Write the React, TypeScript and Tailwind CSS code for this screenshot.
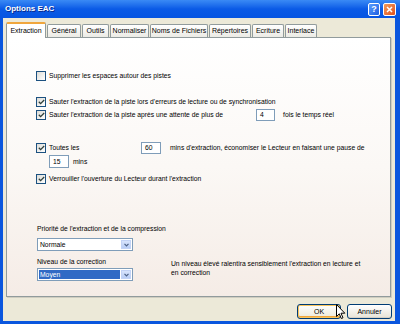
import { ReactNode } from "react";

const tabs = [
  { label: "Extraction", w: "w-[40px]", active: true },
  { label: "Général", w: "w-[34px]" },
  { label: "Outils", w: "w-[27px]" },
  { label: "Normaliser", w: "w-[39px]" },
  { label: "Noms de Fichiers", w: "w-[58px]" },
  { label: "Répertoires", w: "w-[42px]" },
  { label: "Ecriture", w: "w-[32px]" },
  { label: "Interlace", w: "w-[32px]" },
];

const Check = ({ checked = true }: { checked?: boolean }) => (
  <span className="w-[10px] h-[10px] shrink-0 border border-[#1c5180] bg-gradient-to-br from-[#dcdcd7] to-white flex items-center justify-center">
    {checked && (
      <svg width="7" height="6" viewBox="0 0 7 6">
        <path d="M0.8 2.8 L2.6 4.6 L6.2 1" stroke="#2f3f3a" strokeWidth="1.3" fill="none" />
      </svg>
    )}
  </span>
);

const Field = ({ value, className }: { value: string; className: string }) => (
  <span className={`shrink-0 border border-[#7f9db9] bg-white flex items-center pl-[3px] ${className}`}>{value}</span>
);

const Combo = ({ value, selected }: { value: string; selected?: boolean }) => (
  <div className="w-[96px] h-[13px] border border-[#7f9db9] bg-white flex p-[1px]">
    <span
      className={`flex-1 flex items-center pl-[1px] mr-[1px] ${
        selected ? "bg-[#316ac5] text-white" : ""
      }`}
    >
      {value}
    </span>
    <span className="w-[10px] bg-gradient-to-b from-[#d8e4fc] to-[#b9cdf5] border border-[#c3d3f6] flex items-center justify-center">
      <svg width="5" height="4" viewBox="0 0 5 4">
        <path d="M0.5 0.8 L2.5 2.8 L4.5 0.8" stroke="#4d6185" strokeWidth="1.2" fill="none" />
      </svg>
    </span>
  </div>
);

const Row = ({ className, children }: { className: string; children: ReactNode }) => (
  <div className={`h-[13px] flex items-center ${className}`}>{children}</div>
);

export default function App() {
  return (
    <div className="w-[400px] h-[324px] flex flex-col bg-[#0a56de] font-['Liberation_Sans',Arial,sans-serif] text-[6.75px] leading-[10px] text-black relative overflow-hidden">
      {/* title bar */}
      <div className="h-[18px] shrink-0 flex items-center bg-gradient-to-b from-[#3a8af5] via-[#0a5ae6] to-[#0655e2] pl-[5px] pr-[4px]">
        <span className="text-white font-bold text-[8px] [text-shadow:1px_1px_0_#0b2a8c]">Options EAC</span>
        <div className="ml-auto flex gap-[3px]">
          <span className="w-[12px] h-[13px] rounded-[2px] border border-white bg-gradient-to-br from-[#5a9cff] to-[#1f5fe0] flex items-center justify-center text-white font-bold text-[9px]">
            ?
          </span>
          <span className="w-[13px] h-[13px] rounded-[2px] border border-white bg-gradient-to-br from-[#f09a5a] to-[#e0501c] flex items-center justify-center">
            <svg width="7" height="7" viewBox="0 0 7 7">
              <path d="M1 1 L6 6 M6 1 L1 6" stroke="white" strokeWidth="1.5" />
            </svg>
          </span>
        </div>
      </div>

      {/* client */}
      <div className="flex-1 ml-[3px] mr-[5px] mb-[3px] bg-[#ece9d8] flex flex-col">
        <div className="h-[19px] pt-[4px] pl-[3px] flex items-end gap-[1px] relative z-10 text-[7px]">
          {tabs.map((t) =>
            t.active ? (
              <div
                key={t.label}
                className={`${t.w} h-[16px] -mb-[1px] bg-white border-x border-[#919b9c] border-t-2 border-t-[#f0a63c] rounded-t-[2px] flex items-center justify-center`}
              >
                {t.label}
              </div>
            ) : (
              <div
                key={t.label}
                className={`${t.w} h-[13px] bg-gradient-to-b from-white to-[#ecebe5] border-x border-t border-[#919b9c] rounded-t-[2px] flex items-center justify-center`}
              >
                {t.label}
              </div>
            )
          )}
        </div>

        {/* panel */}
        <div className="ml-[3px] w-[385px] h-[260px] border border-[#919b9c] bg-gradient-to-b from-white via-[#fbf8f5] to-[#f5ece6] flex flex-col pl-[29px] shadow-[1px_1px_0_#d0cdc0]">
          <Row className="mt-[31px] gap-[3px]">
            <Check checked={false} />
            <span>Supprimer les espaces autour des pistes</span>
          </Row>
          <Row className="mt-[13px] gap-[3px]">
            <Check />
            <span>Sauter l'extraction de la piste lors d'erreurs de lecture ou de synchronisation</span>
          </Row>
          <Row className="gap-[3px]">
            <Check />
            <span className="w-[204px]">Sauter l'extraction de la piste après une attente de plus de</span>
            <Field value="4" className="w-[19px] h-[12px]" />
            <span className="ml-[5px]">fois le temps réel</span>
          </Row>
          <Row className="mt-[20px] gap-[3px]">
            <Check />
            <span className="w-[89px]">Toutes les</span>
            <Field value="60" className="w-[20px] h-[12px]" />
            <span className="ml-[6px]">mins d'extraction, économiser le Lecteur en faisant une pause de</span>
          </Row>
          <Row className="mt-[1px] pl-[13px]">
            <Field value="15" className="w-[20px] h-[13px]" />
            <span className="ml-[4px]">mins</span>
          </Row>
          <Row className="mt-[4px] gap-[3px]">
            <Check />
            <span>Verrouiller l'ouverture du Lecteur durant l'extraction</span>
          </Row>

          <div className="mt-[39px] ml-[1px] h-[10px]">Priorité de l'extraction et de la compression</div>
          <div className="mt-[4px] ml-[1px]">
            <Combo value="Normale" />
          </div>
          <div className="ml-[1px] flex">
            <div className="flex flex-col">
              <div className="mt-[6px] h-[10px]">Niveau de la correction</div>
              <div className="mt-[1px]">
                <Combo value="Moyen" selected />
              </div>
            </div>
            <div className="ml-[38px] mt-[8px] leading-[9px]">
              Un niveau élevé ralentira sensiblement l'extraction en lecture et
              <br />
              en correction
            </div>
          </div>
        </div>

        {/* buttons */}
        <div className="mt-[7px] mr-[3px] flex justify-end gap-[6px]">
          <button className="w-[44px] h-[15px] rounded-[3px] border border-[#003c74] bg-gradient-to-b from-white to-[#ece9d8] shadow-[inset_0_0_0_1px_#f8c45c,inset_0_-1px_0_1px_#f0a63c] flex items-center justify-center text-[7px]">
            OK
          </button>
          <button className="w-[45px] h-[15px] rounded-[3px] border border-[#003c74] bg-gradient-to-b from-white to-[#e6e3d6] shadow-[inset_0_-1px_0_#d6d0c5] flex items-center justify-center text-[7px]">
            Annuler
          </button>
        </div>
      </div>

      {/* mouse cursor */}
      <svg className="absolute left-[336px] top-[304px]" width="10" height="17" viewBox="0 0 10 17">
        <path d="M0.5 0.5 L0.5 12.5 L3.3 9.8 L5.3 14.5 L7 13.8 L5 9.2 L8.8 9.2 Z" fill="white" stroke="black" strokeWidth="1" />
      </svg>
    </div>
  );
}
